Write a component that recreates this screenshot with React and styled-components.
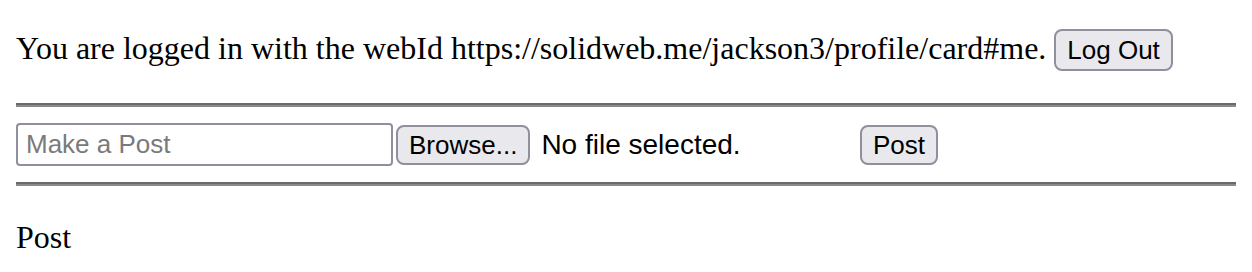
import React from 'react';
import styled, { createGlobalStyle } from 'styled-components';

const Global = createGlobalStyle`
	html, body {
		background: #fff;
	}
	body {
		margin: 0;
		font-family: "Liberation Serif", "Times New Roman", serif;
		font-size: 32px;
		color: #000;
	}
`;

const Page = styled.div`
	padding: 0 16px;
`;

const Line = styled.p`
	margin: ${p => p.$top ?? 32}px 0 ${p => p.$bottom ?? 32}px;
	line-height: 38px;
`;

const Rule = styled.hr`
	margin: 16px 0;
	height: 0;
	border: none;
	border-top: 2px solid #6a6a6a;
	border-bottom: 2px solid #8a8a8a;
`;

const Button = styled.button`
	font-family: "Liberation Sans", Arial, sans-serif;
	font-size: 26px;
	color: #000;
	background: #e9e9ed;
	border: 2px solid #8f8f9d;
	border-radius: 8px;
	padding: 0 ${p => p.$pad || 10}px;
	height: ${p => p.$h || 40}px;
	line-height: 1;
	margin: 0;
`;

const Row = styled.div`
	display: flex;
	align-items: center;
	height: 43px;
`;

const TextInput = styled.input`
	box-sizing: border-box;
	width: 377px;
	height: 43px;
	margin: 0;
	padding: 0 8px;
	border: 2px solid #8f8f9d;
	border-radius: 4px;
	font-family: "Liberation Sans", Arial, sans-serif;
	font-size: 26px;
	color: #000;
	&::placeholder {
		color: #7a7a7a;
	}
`;

const FileBox = styled.div`
	display: flex;
	align-items: center;
	width: 456px;
	margin-left: 3px;
	margin-right: 8px;
`;

const FileText = styled.span`
	font-family: "Liberation Sans", Arial, sans-serif;
	font-size: 28px;
	margin-left: 11px;
`;

function App() {
	return (
		<Page>
			<Global />
			<Line $top={29}>
				You are logged in with the webId https://solidweb.me/jackson3/profile/card#me.{' '}
				<Button $h={42} $pad={11}>Log Out</Button>
			</Line>
			<Rule />
			<Row>
				<TextInput placeholder='Make a Post' />
				<FileBox>
					<Button $pad={11}>Browse...</Button>
					<FileText>No file selected.</FileText>
				</FileBox>
				<Button $pad={11}>Post</Button>
			</Row>
			<Rule />
			<Line $bottom={0}>Post</Line>
		</Page>
	);
}

export default App;
